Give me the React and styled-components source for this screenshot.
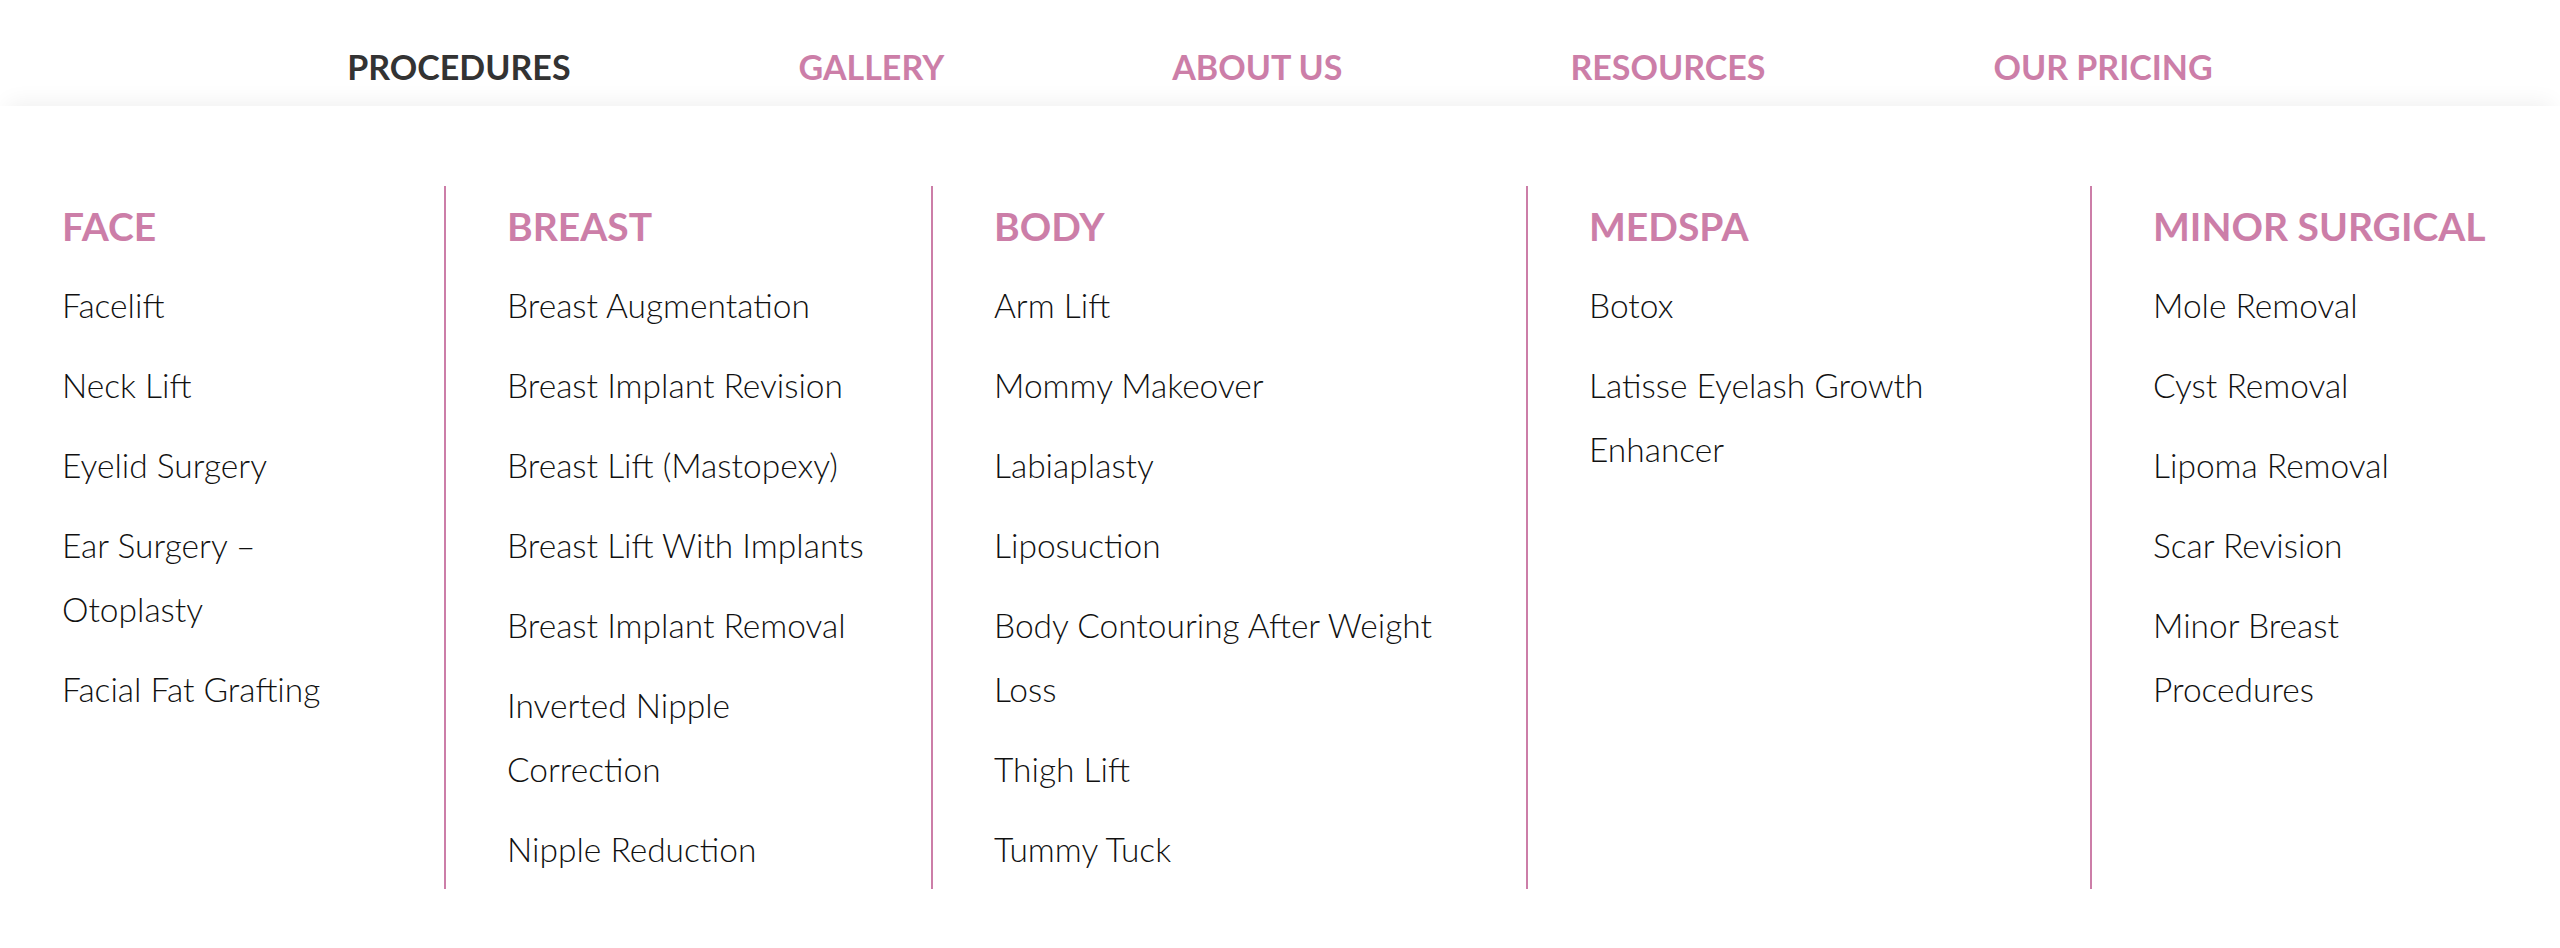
import React from "react";
import styled, { createGlobalStyle } from "styled-components";

const GlobalStyle = createGlobalStyle`
  html, body {
    margin: 0;
    padding: 0;
    background: #ffffff;
  }
  body {
    font-family: Lato, "Liberation Sans", sans-serif;
    color: #222;
  }
  * { box-sizing: border-box; }
`;

const PINK = "#cc7ea8";

const Page = styled.div`
  width: 2560px;
  min-height: 948px;
  background: #fff;
`;

const NavBar = styled.nav`
  display: flex;
  justify-content: center;
  gap: 228px;
  padding: 50px 0 22px;
  background: #fff;
`;

const NavLink = styled.a`
  font-family: Lato, "Liberation Sans", sans-serif;
  font-weight: 700;
  font-size: 34px;
  line-height: 34px;
  text-transform: uppercase;
  text-decoration: none;
  color: ${(p) => (p.$active ? "#333333" : PINK)};
  cursor: pointer;
`;

const Panel = styled.div`
  display: grid;
  grid-template-columns: 444px 487px 595px 564px 1fr;
  padding: 80px 0 59px;
  background: #fff;
  box-shadow: 0 -10px 22px -8px rgba(0, 0, 0, 0.07);
`;

const Column = styled.div`
  padding: 16px 62px 0 ${(p) => (p.$first ? "62px" : "61px")};
  height: 703px;
  border-left: ${(p) => (p.$first ? "none" : `2px solid ${PINK}`)};
`;

const Heading = styled.h3`
  margin: 0 0 15px;
  font-family: Lato, "Liberation Sans", sans-serif;
  font-weight: 700;
  font-size: 39px;
  line-height: 48px;
  color: ${PINK};
  text-transform: uppercase;
`;

const List = styled.ul`
  list-style: none;
  margin: 0;
  padding: 0;
`;

const Item = styled.li`
  padding: 8px 0;
  font-family: Lato, "Liberation Sans", sans-serif;
  font-weight: 300;
  font-size: 33.5px;
  line-height: 64px;
  color: #111;
`;

const navItems = ["Procedures", "Gallery", "About Us", "Resources", "Our Pricing"];

const columns = [
  {
    title: "Face",
    items: ["Facelift", "Neck Lift", "Eyelid Surgery", "Ear Surgery – Otoplasty", "Facial Fat Grafting"],
  },
  {
    title: "Breast",
    items: [
      "Breast Augmentation",
      "Breast Implant Revision",
      "Breast Lift (Mastopexy)",
      "Breast Lift With Implants",
      "Breast Implant Removal",
      "Inverted Nipple Correction",
      "Nipple Reduction",
    ],
  },
  {
    title: "Body",
    items: [
      "Arm Lift",
      "Mommy Makeover",
      "Labiaplasty",
      "Liposuction",
      "Body Contouring After Weight Loss",
      "Thigh Lift",
      "Tummy Tuck",
    ],
  },
  {
    title: "MedSpa",
    items: ["Botox", "Latisse Eyelash Growth Enhancer"],
  },
  {
    title: "Minor Surgical",
    items: ["Mole Removal", "Cyst Removal", "Lipoma Removal", "Scar Revision", "Minor Breast Procedures"],
  },
];

export default function App() {
  return (
    <Page>
      <GlobalStyle />
      <NavBar>
        {navItems.map((n, i) => (
          <NavLink key={n} $active={i === 0}>
            {n}
          </NavLink>
        ))}
      </NavBar>
      <Panel>
        {columns.map((c, i) => (
          <Column key={c.title} $first={i === 0}>
            <Heading>{c.title}</Heading>
            <List>
              {c.items.map((it) => (
                <Item key={it}>{it}</Item>
              ))}
            </List>
          </Column>
        ))}
      </Panel>
    </Page>
  );
}
